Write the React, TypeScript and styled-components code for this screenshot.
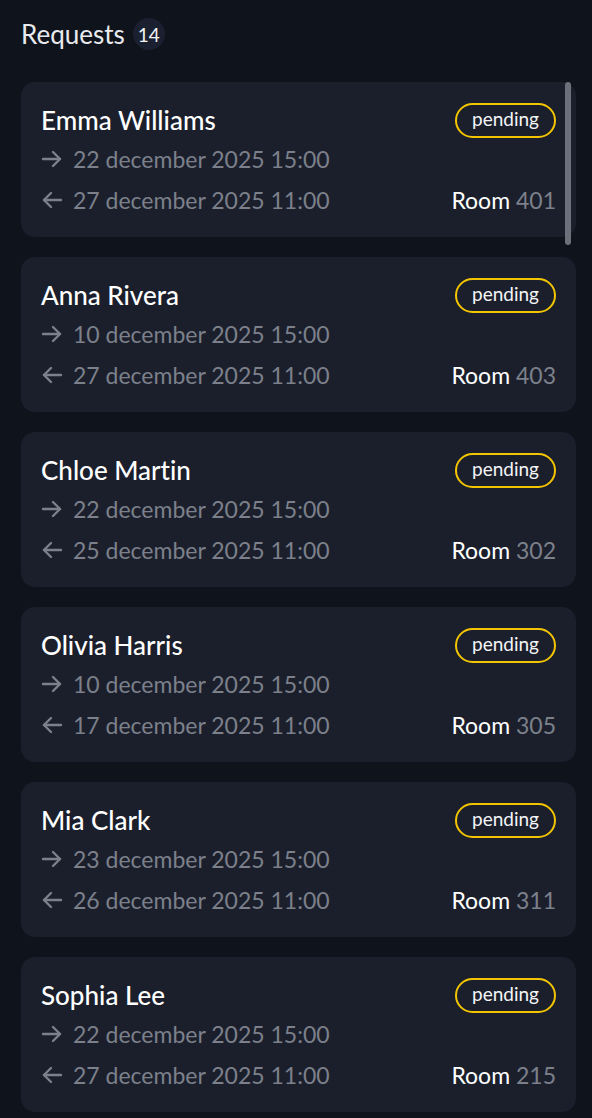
import React from "react";
import styled, { createGlobalStyle } from "styled-components";

const GlobalStyle = createGlobalStyle`
    html, body {
        margin: 0;
        padding: 0;
        background-color: #0f131c;
        overflow: hidden;
    }
    body {
        font-family: Lato, "Noto Sans", sans-serif;
        font-variant-ligatures: none;
        -webkit-font-smoothing: antialiased;
    }
`;

const Page = styled.div`
    width: 592px;
    height: 1118px;
    display: flex;
    flex-direction: column;
    background-color: #0f131c;
    overflow: hidden;
`;

const Header = styled.div`
    display: flex;
    align-items: center;
    gap: 8px;
    height: 32px;
    padding: 18px 21px 0 21px;
    margin-bottom: 32px;
`;

const Title = styled.div`
    color: #e8eaee;
    font-size: 26px;
    font-weight: 400;
`;

const CountBadge = styled.div`
    display: flex;
    align-items: center;
    justify-content: center;
    width: 32px;
    height: 32px;
    border-radius: 50%;
    background-color: #1b2030;
    color: #f2f3f5;
    font-size: 19px;
`;

const ListArea = styled.div`
    position: relative;
    flex: 1;
    overflow: hidden;
`;

const List = styled.div`
    display: flex;
    flex-direction: column;
    gap: 20px;
    padding: 0 16px 0 21px;
`;

const ScrollThumb = styled.div`
    position: absolute;
    top: 0;
    right: 21px;
    width: 6px;
    height: 163px;
    border-radius: 3px;
    background-color: #6c707a;
`;

const Card = styled.div`
    display: flex;
    flex-direction: column;
    padding: 20px 20px 17px 20px;
    border-radius: 14px;
    background-color: #1b1f2c;
`;

const TopRow = styled.div`
    display: flex;
    align-items: center;
    justify-content: space-between;
    height: 36px;
`;

const Name = styled.div`
    color: #ffffff;
    font-size: 26px;
    font-weight: 500;
`;

const StatusPill = styled.div`
    display: flex;
    align-items: center;
    justify-content: center;
    box-sizing: border-box;
    height: 35px;
    padding: 0 15px 3px 15px;
    border: 2px solid #f2c500;
    border-radius: 18px;
    color: #f4f5f7;
    font-size: 19px;
`;

const DateRow = styled.div`
    display: flex;
    align-items: center;
    justify-content: space-between;
    height: 41px;
`;

const DateText = styled.div`
    display: flex;
    align-items: center;
    gap: 10px;
    color: #7c808a;
    font-size: 23px;
`;

const Room = styled.div`
    color: #ffffff;
    font-size: 23px;
    span {
        color: #7c808a;
    }
`;

const Arrow = ({ dir }: { dir: "in" | "out" }) => (
    <svg width="22" height="18" viewBox="0 0 22 18" fill="none" stroke="#7c808a" strokeWidth="2.4" strokeLinecap="round" strokeLinejoin="round">
        {dir === "in" ? (
            <>
                <path d="M2 9h17" />
                <path d="M12 2L19 9l-7 7" />
            </>
        ) : (
            <>
                <path d="M20 9H3" />
                <path d="M10 2L3 9l7 7" />
            </>
        )}
    </svg>
);

const requests = [
    { id: 1, name: "Emma Williams", from: "22 december 2025 15:00", to: "27 december 2025 11:00", room: 401 },
    { id: 2, name: "Anna Rivera", from: "10 december 2025 15:00", to: "27 december 2025 11:00", room: 403 },
    { id: 3, name: "Chloe Martin", from: "22 december 2025 15:00", to: "25 december 2025 11:00", room: 302 },
    { id: 4, name: "Olivia Harris", from: "10 december 2025 15:00", to: "17 december 2025 11:00", room: 305 },
    { id: 5, name: "Mia Clark", from: "23 december 2025 15:00", to: "26 december 2025 11:00", room: 311 },
    { id: 6, name: "Sophia Lee", from: "22 december 2025 15:00", to: "27 december 2025 11:00", room: 215 },
    { id: 7, name: "Grace Walker", from: "24 december 2025 15:00", to: "28 december 2025 11:00", room: 208 },
    { id: 8, name: "Lily Young", from: "20 december 2025 15:00", to: "23 december 2025 11:00", room: 112 },
    { id: 9, name: "Ella King", from: "18 december 2025 15:00", to: "21 december 2025 11:00", room: 104 },
    { id: 10, name: "Zoe Scott", from: "26 december 2025 15:00", to: "30 december 2025 11:00", room: 410 },
    { id: 11, name: "Ava Green", from: "27 december 2025 15:00", to: "31 december 2025 11:00", room: 306 },
    { id: 12, name: "Ruby Adams", from: "28 december 2025 15:00", to: "2 january 2026 11:00", room: 201 },
    { id: 13, name: "Isla Baker", from: "29 december 2025 15:00", to: "3 january 2026 11:00", room: 309 },
    { id: 14, name: "Maya Hall", from: "30 december 2025 15:00", to: "4 january 2026 11:00", room: 402 }
];

export default function App() {
    return (
        <Page>
            <GlobalStyle />
            <Header>
                <Title>Requests</Title>
                <CountBadge>{requests.length}</CountBadge>
            </Header>
            <ListArea>
                <List>
                    {requests.map((item) => (
                        <Card key={item.id}>
                            <TopRow>
                                <Name>{item.name}</Name>
                                <StatusPill>pending</StatusPill>
                            </TopRow>
                            <DateRow>
                                <DateText>
                                    <Arrow dir="in" />
                                    {item.from}
                                </DateText>
                            </DateRow>
                            <DateRow>
                                <DateText>
                                    <Arrow dir="out" />
                                    {item.to}
                                </DateText>
                                <Room>
                                    Room <span>{item.room}</span>
                                </Room>
                            </DateRow>
                        </Card>
                    ))}
                </List>
                <ScrollThumb />
            </ListArea>
        </Page>
    );
}
